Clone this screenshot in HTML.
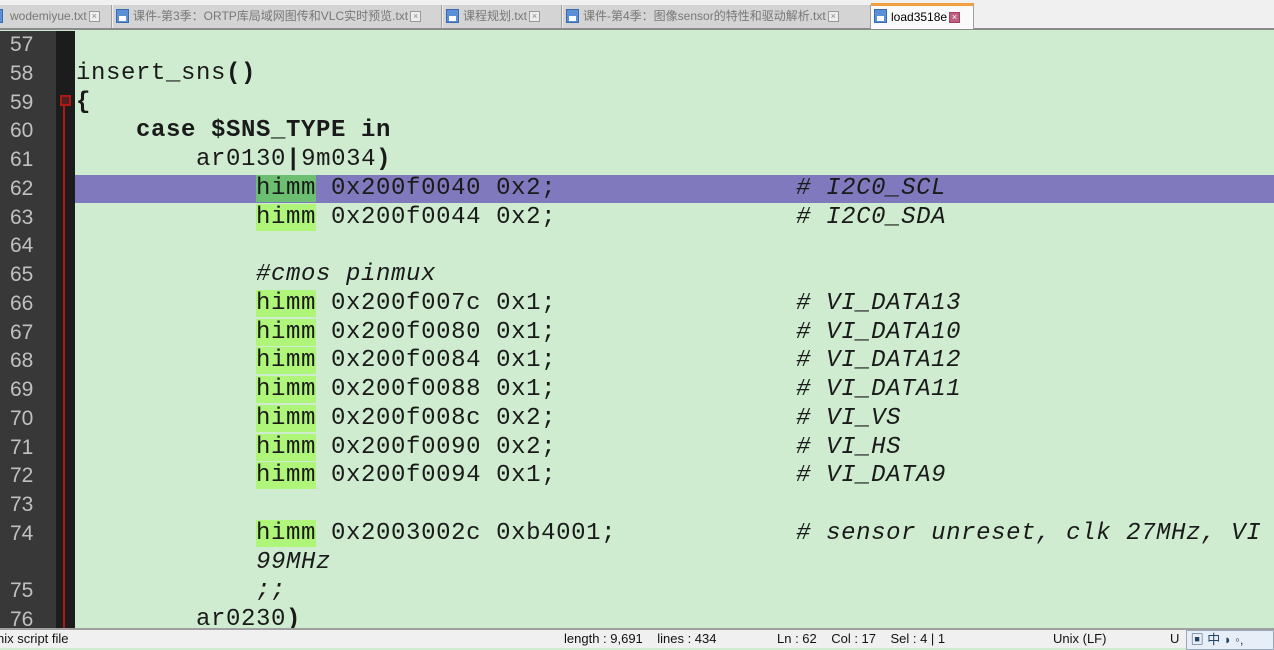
<!DOCTYPE html>
<html><head><meta charset="utf-8"><style>
*{margin:0;padding:0;box-sizing:border-box}
body{width:1274px;height:648px;overflow:hidden;background:#cfecd0;position:relative;font-family:"Liberation Sans","Noto Sans CJK SC",sans-serif}
#tabs{position:absolute;left:0;top:0;width:1274px;height:30px;background:#f0f0f0;border-bottom:2px solid #8a8a8a}
.tab{position:absolute;top:5px;height:23px;background:#d4d4d4;border-right:1px solid #a0a0a0;font-size:12px;color:#777;line-height:23px;white-space:nowrap;overflow:hidden;padding-left:20px}
.tab .ic{position:absolute;left:3px;top:4px;width:13px;height:14px;background:#5b8fd6;border:1px solid #3a6ab0}
.tab .ic:after{content:"";position:absolute;left:2px;top:6px;width:7px;height:5px;background:#fff}
.tab .x{display:inline-block;width:11px;height:11px;border:1px solid #999;background:#eee;vertical-align:middle;margin-left:2px;font-size:9px;line-height:9px;text-align:center;color:#888}
.tab.act{background:#fafafa;color:#000;top:3px;height:26px;border-top:3px solid #f0a040;line-height:22px}
#gut{position:absolute;left:0;top:31px;width:56px;height:597px;background:#383838}
#gut2{position:absolute;left:56px;top:31px;width:19px;height:597px;background:#1c1c1c}
#red{position:absolute;left:63px;top:104px;width:2px;height:524px;background:#b01818}
#mark{position:absolute;left:60px;top:95px;width:11px;height:11px;border:2px solid #b01818;background:#502020}
.hl{position:absolute;left:75px;width:1199px;height:28px;background:#8079bd}
.row{position:absolute;left:0;height:28.75px;line-height:28.75px;font-family:"Liberation Mono",monospace;font-size:24px;letter-spacing:0.6px;white-space:pre;color:#1a1a1a}
.num{position:absolute;left:0;width:56px;padding-left:10px;font-size:21px;color:#c0c0c0;line-height:28.75px;height:28.75px}
.t{position:absolute;left:76px}
b{font-weight:bold}
i{font-style:italic}
.g{background:#aef57a}
.gd{background:#6cbf70}
#status{position:absolute;left:0;top:628px;width:1274px;height:20px;background:#f0f0f0;border-top:2px solid #a0a0a0;font-size:13px;color:#111;line-height:18px}
#status span{position:absolute;top:0}
</style></head><body>
<div id="tabs">
<div class="tab" style="left:-8px;width:120px;padding-left:18px"><span class="ic" style="left:-2px"></span>wodemiyue.txt<span class="x">×</span></div>
<div class="tab" style="left:113px;width:329px"><span class="ic"></span>课件-第3季：ORTP库局域网图传和VLC实时预览.txt<span class="x">×</span></div>
<div class="tab" style="left:443px;width:119px"><span class="ic"></span>课程规划.txt<span class="x">×</span></div>
<div class="tab" style="left:563px;width:308px"><span class="ic"></span>课件-第4季：图像sensor的特性和驱动解析.txt<span class="x">×</span></div>
<div class="tab act" style="left:871px;width:103px"><span class="ic" style="top:3px"></span>load3518e<span class="x" style="background:#c06080;color:#fff;border-color:#a04060">×</span></div>
</div>
<div id="gut"></div><div id="gut2"></div><div id="red"></div><div id="mark"></div>
<div class="hl" style="top:175px"></div>
<div style="position:absolute;left:0;top:31px;width:1274px;height:597px;overflow:hidden">
<div class="num" style="top:0">57</div>
<div class="num" style="top:28.75px">58</div>
<div class="num" style="top:57.5px">59</div>
<div class="num" style="top:86.25px">60</div>
<div class="num" style="top:115px">61</div>
<div class="num" style="top:143.75px">62</div>
<div class="num" style="top:172.5px">63</div>
<div class="num" style="top:201.25px">64</div>
<div class="num" style="top:230px">65</div>
<div class="num" style="top:258.75px">66</div>
<div class="num" style="top:287.5px">67</div>
<div class="num" style="top:316.25px">68</div>
<div class="num" style="top:345px">69</div>
<div class="num" style="top:373.75px">70</div>
<div class="num" style="top:402.5px">71</div>
<div class="num" style="top:431.25px">72</div>
<div class="num" style="top:460px">73</div>
<div class="num" style="top:488.75px">74</div>
<div class="num" style="top:546.25px">75</div>
<div class="num" style="top:575px">76</div>

<div class="row t" style="top:28.75px">insert_sns<b>()</b></div>
<div class="row t" style="top:57.5px"><b>{</b></div>
<div class="row t" style="top:86.25px">    <b>case $SNS_TYPE in</b></div>
<div class="row t" style="top:115px">        ar0130<b>|</b>9m034<b>)</b></div>
<div class="row t" style="top:143.75px">            <span class="gd">himm</span> 0x200f0040 0x2;                <i># I2C0_SCL</i></div>
<div class="row t" style="top:172.5px">            <span class="g">himm</span> 0x200f0044 0x2;                <i># I2C0_SDA</i></div>
<div class="row t" style="top:230px">            <i>#cmos pinmux</i></div>
<div class="row t" style="top:258.75px">            <span class="g">himm</span> 0x200f007c 0x1;                <i># VI_DATA13</i></div>
<div class="row t" style="top:287.5px">            <span class="g">himm</span> 0x200f0080 0x1;                <i># VI_DATA10</i></div>
<div class="row t" style="top:316.25px">            <span class="g">himm</span> 0x200f0084 0x1;                <i># VI_DATA12</i></div>
<div class="row t" style="top:345px">            <span class="g">himm</span> 0x200f0088 0x1;                <i># VI_DATA11</i></div>
<div class="row t" style="top:373.75px">            <span class="g">himm</span> 0x200f008c 0x2;                <i># VI_VS</i></div>
<div class="row t" style="top:402.5px">            <span class="g">himm</span> 0x200f0090 0x2;                <i># VI_HS</i></div>
<div class="row t" style="top:431.25px">            <span class="g">himm</span> 0x200f0094 0x1;                <i># VI_DATA9</i></div>
<div class="row t" style="top:488.75px">            <span class="g">himm</span> 0x2003002c 0xb4001;            <i># sensor unreset, clk 27MHz, VI</i></div>
<div class="row t" style="top:517.5px">            <i>99MHz</i></div>
<div class="row t" style="top:546.25px">            <i>;;</i></div>
<div class="row t" style="top:575px">        ar0230<b>)</b></div>
</div>
<div id="status">
<span style="left:-3px">nix script file</span>
<span style="left:564px">length : 9,691&nbsp;&nbsp;&nbsp; lines : 434</span>
<span style="left:777px">Ln : 62&nbsp;&nbsp;&nbsp; Col : 17&nbsp;&nbsp;&nbsp; Sel : 4 | 1</span>
<span style="left:1053px">Unix (LF)</span>
<span style="left:1170px">U</span>
<span style="left:1186px;width:88px;height:20px;background:#e8eef8;border:1px solid #9ab;color:#246">&nbsp;▣ 中 ◗ ◦,</span>
</div>
</body></html>
